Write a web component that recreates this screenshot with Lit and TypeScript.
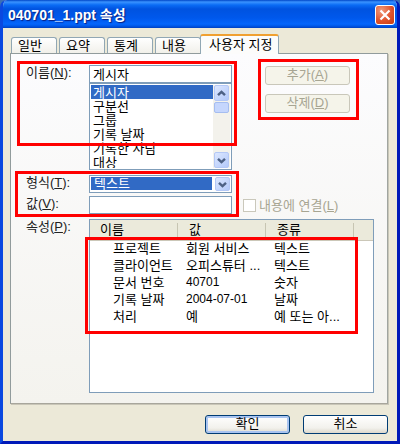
import { LitElement, html, css, svg } from "lit";
import { customElement, state } from "lit/decorators.js";
import { classMap } from "lit/directives/class-map.js";

const TABS = ["일반", "요약", "통계", "내용", "사용자 지정"];
const NAMES = ["게시자", "구분선", "그룹", "기록 날짜", "기록한 사람", "대상"];
const ROWS = [
  ["프로젝트", "회원 서비스", "텍스트"],
  ["클라이언트", "오피스튜터 ...", "텍스트"],
  ["문서 번호", "40701", "숫자"],
  ["기록 날짜", "2004-07-01", "날짜"],
  ["처리", "예", "예 또는 아..."],
];

const chevron = (up: boolean) => html`<svg width="9" height="7" viewBox="0 0 9 7" aria-hidden="true">
  ${up
    ? svg`<path d="M1 5.2 4.5 1.8 8 5.2" fill="none" stroke="#4d6185" stroke-width="2.4" />`
    : svg`<path d="M1 1.8 4.5 5.2 8 1.8" fill="none" stroke="#4d6185" stroke-width="2.4" />`}
</svg>`;

@customElement("app-root")
export class AppRoot extends LitElement {
  @state() private tab = 4;
  @state() private name = NAMES[0];

  static styles = css`
    :host {
      display: block;
      font: 13px/16px "Liberation Sans", "Noto Sans CJK KR", sans-serif;
      color: #000;
      background: #3c6fb4;
    }
    * { box-sizing: border-box; }
    button, input, select { font: inherit; color: inherit; margin: 0; padding: 0; border-radius: 0; }
    .window {
      border: solid #0a3fd8;
      border-width: 0 3px 3px;
      border-color: #0831d9 #0019b8 #0019b8 #0a48e0;
      border-radius: 7px 7px 0 0;
      background: #ece9d8;
      overflow: hidden;
    }
    .titlebar {
      display: flex;
      align-items: center;
      justify-content: space-between;
      height: 28px;
      margin: 0 -3px;
      padding: 2px 5px 0 8px;
      background: linear-gradient(#0046c8 0, #3a93ff 2px, #0a6cf5 5px, #0053e0 9px, #0058ec 18px, #0566fb 24px, #0058e8 26px, #0040c0 28px);
      color: #fff;
    }
    .title { margin: 0; font-size: 14px; line-height: 20px; font-weight: 700; text-shadow: 1px 1px 1px #0a1f80; }
    .close {
      display: grid;
      place-items: center;
      width: 20px;
      height: 20px;
      border: 1px solid #fff;
      border-radius: 3px;
      background: radial-gradient(circle at 30% 25%, #f09a7c, #e0532c 55%, #c63c12);
    }
    .body { padding: 6px 9px 7px 7px; }
    .tabs { display: flex; align-items: flex-end; height: 19px; padding-left: 1px; }
    .tab {
      width: 46px;
      height: 16px;
      margin-right: 2px;
      padding-left: 6px;
      border: 1px solid #91a7b4;
      border-bottom: 0;
      border-radius: 3px 3px 0 0;
      background: linear-gradient(#fff, #f1f0ea);
      text-align: left;
      line-height: 15px;
      white-space: nowrap;
    }
    .tab.on {
      z-index: 1;
      width: 79px;
      height: 20px;
      margin: 0 0 -1px -3px;
      padding: 0 0 2px 8px;
      border-top: 2px solid #f0a030;
      background: #fcfcfb;
      line-height: 15px;
    }
    .panel {
      padding: 11px 13px 10px 15px;
      border: 1px solid #919b9c;
      border-color: #919b9c #a0a5a0 #a8a69c #919b9c;
      box-shadow: 1px 1px #c9c6b8;
      background: linear-gradient(#fcfcfe, #f4f3ee);
    }
    .top { display: grid; grid-template-columns: minmax(0, 1fr) 131px; gap: 11px; }
    .left { display: flex; flex-direction: column; gap: 5px; }
    .right { display: flex; flex-direction: column; justify-content: space-between; padding-top: 1px; }
    .group { position: relative; display: flex; flex-direction: column; gap: 3px; }
    .row { display: grid; grid-template-columns: 63px minmax(0, 1fr); }
    .label { line-height: 15px; color: #222; }
    .stack { display: flex; flex-direction: column; }
    .text {
      width: 100%;
      height: 18px;
      padding: 0 3px 2px;
      border: 1px solid #7f9db9;
      background: #fff;
      line-height: 14px;
      outline: 0;
    }
    .listbox { display: flex; height: 87px; padding: 1px; border: 1px solid #7f9db9; background: #fff; }
    .names { flex: 1; min-width: 0; height: 83px; border: 0; outline: 0; background: #fff; overflow: hidden; }
    .names option {
      display: flex;
      align-items: center;
      height: 14px;
      min-height: 14px;
      padding: 0 2px 2px;
      line-height: 12px;
      color: #000;
    }
    .names option:checked { color: #fff; background: #316ac5 linear-gradient(#316ac5, #316ac5); }
    .scroll { display: flex; flex-direction: column; width: 17px; background: #f3f2ec; }
    .arrow {
      display: grid;
      place-items: center;
      width: 15px;
      height: 16px;
      margin-left: 1px;
      border: 1px solid #b4c8f6;
      border-radius: 2px;
      background: linear-gradient(135deg, #dce7ff, #b3c9fa);
    }
    .thumb { height: 11px; margin: 1px 1px auto 1px; border: 1px solid #a5bdf0; border-radius: 2px; background: #c5d6fd; }
    .combo { position: relative; }
    .type {
      display: block;
      appearance: none;
      width: 100%;
      height: 18px;
      padding: 1px 19px 2px 1px;
      border: 1px solid #7f9db9;
      outline: 0;
      background: linear-gradient(#316ac5, #316ac5) content-box, #fff;
      color: #fff;
      line-height: 12px;
      text-indent: 3px;
    }
    .combo .arrow { position: absolute; top: 2px; right: 2px; height: 14px; pointer-events: none; }
    .commands { position: relative; display: flex; flex-direction: column; gap: 9px; width: 85px; margin-left: 22px; }
    .button {
      height: 19px;
      padding-bottom: 2px;
      border: 1px solid #003c74;
      border-radius: 3px;
      background: linear-gradient(#fff, #f2f1ec 70%, #dcd8cc);
      line-height: 15px;
    }
    .button.default { box-shadow: inset 0 0 0 2px #a9c4f0; }
    .button:disabled { border-color: #c9c7ba; background: #f5f4ea; color: #a7a592; }
    .check { display: flex; align-items: center; gap: 3px; height: 17px; color: #a7a592; white-space: nowrap; }
    .box { appearance: none; width: 13px; height: 13px; border: 1px solid #cac8bb; background: #fff; }
    .props { margin-top: 5px; }
    .list { position: relative; height: 174px; border: 1px solid #7f9db9; background: #fff; }
    .table { width: 100%; table-layout: fixed; border-collapse: collapse; }
    .col { width: 88px; }
    .table thead { background: #ebeadb; }
    .table th {
      height: 20px;
      padding: 0 0 0 11px;
      font-weight: 400;
      text-align: left;
      line-height: 16px;
      background: linear-gradient(#c7c5b2, #c7c5b2) 100% 3px / 1px 14px no-repeat;
      border-bottom: 1px solid #cbc7b8;
    }
    .table th:first-child { padding-left: 10px; }
    .table th:last-child { background: none; }
    .table td { height: 17px; padding: 0 0 2px 8px; line-height: 15px; white-space: nowrap; }
    .table td:first-child { padding-left: 23px; }
    .table .num { font-size: 12px; }
    .mark { position: absolute; z-index: 2; border: 3px solid #f00; pointer-events: none; }
    .mark.names-mark { inset: -4px -5px 24px -9px; }
    .mark.type-mark { inset: -4px -7px -3px -11px; }
    .mark.commands-mark { inset: -7px -9px -7px -7px; }
    .mark.list-mark { inset: 17px 15px 58px -5px; }
    .footer { display: flex; justify-content: flex-end; gap: 13px; margin-top: 11px; }
    .footer .button { width: 85px; }
  `;

  private pick(e: Event) {
    this.name = (e.target as HTMLSelectElement).value;
  }

  render() {
    return html`
      <main class="window">
        <header class="titlebar">
          <h1 class="title">040701_1.ppt 속성</h1>
          <button class="close" aria-label="닫기">
            <svg width="12" height="12" viewBox="0 0 12 12" aria-hidden="true">
              <path d="M1.5 1.5 10.5 10.5M10.5 1.5 1.5 10.5" stroke="#fff" stroke-width="2.2" />
            </svg>
          </button>
        </header>
        <div class="body">
          <div class="tabs" role="tablist">
            ${TABS.map(
              (t, i) => html`<button
                class=${classMap({ tab: true, on: i === this.tab })}
                role="tab"
                aria-selected=${i === this.tab}
                @click=${() => (this.tab = i)}
              >${t}</button>`,
            )}
          </div>
          <section class="panel" role="tabpanel">
            <div class="top">
              <div class="left">
                <div class="group">
                  <div class="row">
                    <label class="label" for="name">이름(<u>N</u>):</label>
                    <div class="stack">
                      <input class="text" id="name" .value=${this.name} />
                      <div class="listbox">
                        <select class="names" size="6" aria-label="이름" @change=${this.pick}>
                          ${NAMES.map((n, i) => html`<option ?selected=${i === 0}>${n}</option>`)}
                        </select>
                        <div class="scroll" aria-hidden="true">
                          <span class="arrow">${chevron(true)}</span>
                          <span class="thumb"></span>
                          <span class="arrow">${chevron(false)}</span>
                        </div>
                      </div>
                    </div>
                  </div>
                  <div class="mark names-mark"></div>
                </div>
                <div class="group">
                  <div class="row">
                    <label class="label" for="type">형식(<u>T</u>):</label>
                    <div class="combo">
                      <select class="type" id="type"><option>텍스트</option></select>
                      <span class="arrow">${chevron(false)}</span>
                    </div>
                  </div>
                  <div class="row">
                    <label class="label" for="value">값(<u>V</u>):</label>
                    <input class="text" id="value" />
                  </div>
                  <div class="mark type-mark"></div>
                </div>
              </div>
              <div class="right">
                <div class="commands">
                  <button class="button" disabled>추가(<u>A</u>)</button>
                  <button class="button" disabled>삭제(<u>D</u>)</button>
                  <div class="mark commands-mark"></div>
                </div>
                <label class="check"><input class="box" type="checkbox" disabled /><span>내용에 연결(<u>L</u>)</span></label>
              </div>
            </div>
            <div class="row props">
              <span class="label" id="props">속성(<u>P</u>):</span>
              <div class="list">
                <table class="table" aria-labelledby="props">
                  <colgroup><col class="col" /><col class="col" /><col class="col" /><col /></colgroup>
                  <thead>
                    <tr><th>이름</th><th>값</th><th>종류</th><th></th></tr>
                  </thead>
                  <tbody>
                    ${ROWS.map(
                      ([n, v, k]) => html`<tr>
                        <td>${n}</td>
                        <td class=${classMap({ num: /^\d/.test(v) })}>${v}</td>
                        <td colspan="2">${k}</td>
                      </tr>`,
                    )}
                  </tbody>
                </table>
                <div class="mark list-mark"></div>
              </div>
            </div>
          </section>
          <footer class="footer">
            <button class="button default">확인</button>
            <button class="button">취소</button>
          </footer>
        </div>
      </main>
    `;
  }
}
